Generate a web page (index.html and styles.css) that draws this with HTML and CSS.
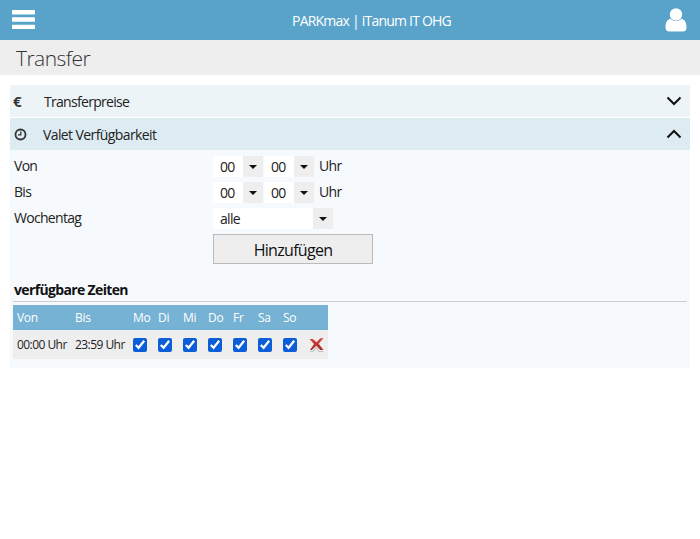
FILE: index.html
```html
<!DOCTYPE html>
<html lang="de">
<head>
<meta charset="utf-8">
<title>Transfer</title>
<link rel="stylesheet" href="styles.css">
</head>
<body>
<header class="topbar">
  <svg class="menu-icon" width="23" height="20" viewBox="0 0 23 20"><rect y="0" width="23" height="4.4" rx=".6" fill="#fff"/><rect y="7.300" width="23" height="4.400" rx=".6" fill="#fff"/><rect y="14.700" width="23" height="4.400" rx=".6" fill="#fff"/></svg>
  <div class="brand">PARKmax | iTanum IT OHG</div>
  <svg class="user-icon" width="22" height="24" viewBox="0 0 22 24"><circle cx="11" cy="6.500" r="6.200" fill="#fff"/><path d="M.5 19.500c0-5.500 2-8 5-8.700 1.500 1.500 3.300 2.300 5.500 2.300s4-.8 5.500-2.300c3 .7 5 3.200 5 8.700 0 2.800-1.500 4-3.500 4H4c-2 0-3.500-1.200-3.500-4z" fill="#fff"/></svg>
</header>
<div class="title-bar"><h1 class="title">Transfer</h1></div>
<main class="content">
  <div class="acc-head acc-closed">
    <span class="acc-icon euro">€</span>
    <span class="acc-label">Transferpreise</span>
    <svg class="chev" width="16" height="10" viewBox="0 0 16 10"><path d="M1.500 1.500L8 8l6.500-6.500" fill="none" stroke="#111" stroke-width="2"/></svg>
  </div>
  <div class="acc-head acc-open">
    <svg class="acc-icon clock" width="13" height="13" viewBox="0 0 13 13"><circle cx="6.500" cy="6.500" r="5" fill="none" stroke="#333" stroke-width="1.800"/><path d="M6.800 3.500v3.300H4" fill="none" stroke="#333" stroke-width="1.300"/></svg>
    <span class="acc-label acc-label-wide">Valet Verfügbarkeit</span>
    <svg class="chev" width="16" height="10" viewBox="0 0 16 10"><path d="M1.500 8.500L8 2l6.500 6.500" fill="none" stroke="#111" stroke-width="2"/></svg>
  </div>
  <section class="panel">
    <form class="form">
      <div class="row"><span class="row-label">Von</span>
        <span class="sel sel-time"><span class="sel-val">00</span><span class="caret-box"><i class="caret"></i></span></span>
        <span class="sel sel-time"><span class="sel-val">00</span><span class="caret-box"><i class="caret"></i></span></span>
        <span class="unit">Uhr</span></div>
      <div class="row"><span class="row-label">Bis</span>
        <span class="sel sel-time"><span class="sel-val">00</span><span class="caret-box"><i class="caret"></i></span></span>
        <span class="sel sel-time"><span class="sel-val">00</span><span class="caret-box"><i class="caret"></i></span></span>
        <span class="unit">Uhr</span></div>
      <div class="row"><span class="row-label">Wochentag</span>
        <span class="sel sel-wide"><span class="sel-val">alle</span><span class="caret-box"><i class="caret"></i></span></span></div>
      <div class="row-btn"><button type="button" class="add-btn">Hinzufügen</button></div>
    </form>
    <h2 class="sub">verfügbare Zeiten</h2>
    <table class="times">
      <colgroup><col class="c-time"><col class="c-time"><col class="c-day"><col class="c-day"><col class="c-day"><col class="c-day"><col class="c-day"><col class="c-day"><col class="c-day"><col class="c-del"></colgroup>
      <thead><tr><th>Von</th><th>Bis</th><th>Mo</th><th>Di</th><th>Mi</th><th>Do</th><th>Fr</th><th>Sa</th><th>So</th><th></th></tr></thead>
      <tbody><tr><td class="t">00:00 Uhr</td><td class="t">23:59 Uhr</td>
        <td><input class="chk" type="checkbox" checked></td><td><input class="chk" type="checkbox" checked></td><td><input class="chk" type="checkbox" checked></td><td><input class="chk" type="checkbox" checked></td><td><input class="chk" type="checkbox" checked></td><td><input class="chk" type="checkbox" checked></td><td><input class="chk" type="checkbox" checked></td>
        <td><svg class="del" width="16" height="15" viewBox="0 0 16 15"><defs><linearGradient id="xg" x1="0" y1="0" x2="0" y2="1"><stop offset="0" stop-color="#d8453e"/><stop offset="1" stop-color="#a82a26"/></linearGradient></defs><path d="M1 14.500h3l3-4 3 4h4" fill="none" stroke="#c4c0c0" stroke-width="1.200"/><path d="M.5 2h3.200l4 3.300L11 1.500l3.500-.5-4.800 5.800 4.800 6.200h-3.200L7.300 8.800 2.800 13H1l4-6z" fill="url(#xg)"/></svg></td></tr></tbody>
    </table>
  </section>
</main>
</body>
</html>
```
FILE: styles.css
```css
* { box-sizing: border-box; }
html, body { margin: 0; padding: 0; background: #fff; }
body { font-family: "Open Sans", sans-serif; font-size: 14px; letter-spacing: -0.7px; color: #222; }
.topbar { height: 40px; background: #59a3ca; display: flex; align-items: center; justify-content: space-between; padding: 0 13px 0 12px; }
.brand { color: #fff; font-size: 14px; letter-spacing: -0.78px; margin-left: 43px; }
.title-bar { height: 35px; background: #eee; padding-left: 16px; display: flex; align-items: center; }
.title { margin: 0; font-size: 21px; font-weight: 300; letter-spacing: -0.55px; color: #333; }
.content { padding: 10px 10px 0; }
.acc-head { height: 32px; display: flex; align-items: center; padding: 0 8px 0 3px; margin-bottom: 1px; }
.acc-closed { background: #edf4f8; }
.acc-open { background: #ddebf3; margin-bottom: 0; }
.acc-icon { width: 31px; flex: none; }
.euro { font-weight: 700; font-size: 15px; color: #333; }
.clock { width: 13px; margin-left: 1px; margin-right: 16px; }
.acc-label { flex: 1; }
.acc-label-wide { letter-spacing: -0.6px; }
.panel { background: #f6fafd; padding: 6px 3px 0; height: 218px; }
.row { display: flex; align-items: center; height: 21px; margin-bottom: 5px; }
.row-label { width: 200px; padding: 0 0 2px 1px; }
.sel { display: flex; height: 21px; background: #fff; margin-right: 1px; }
.sel-time { width: 50px; }
.sel-wide { width: 120px; }
.sel-val { flex: 1; padding-left: 7px; line-height: 21px; }
.caret-box { width: 20px; background: #eee; display: flex; align-items: center; justify-content: center; }
.caret { width: 0; height: 0; border: 4.500px solid transparent; border-top-color: #111; border-bottom: 0; }
.unit { margin-left: 4px; padding-bottom: 2px; }
.row-btn { padding-left: 200px; }
.add-btn { display: block; width: 160px; height: 30px; background: #eee; border: 1px solid #bbb; font: inherit; font-size: 16px; letter-spacing: -0.7px; color: #111; padding: 1px 0 0; }
.sub { margin: 16px 0 3px; height: 22px; line-height: 19px; font-size: 14px; font-weight: 700; letter-spacing: -0.65px; color: #111; border-bottom: 1px solid #ccc; padding: 0 1px; }
.times { border-collapse: collapse; font-size: 12px; letter-spacing: -0.55px; table-layout: fixed; width: 315px; }
.c-time { width: 58px; }
.c-day { width: 25px; }
.c-del { width: 24px; }
.times th { background: #76b2d3; color: #fff; font-weight: 400; height: 25px; text-align: left; padding: 0 0 0 4px; letter-spacing: -0.3px; }
.times td { background: #eee; height: 29px; padding: 0 0 0 4px; white-space: nowrap; }
.chk { margin: 0; width: 14px; height: 14px; accent-color: #0b5ed7; display: block; }
.del { display: block; margin-left: 1px; }
```
